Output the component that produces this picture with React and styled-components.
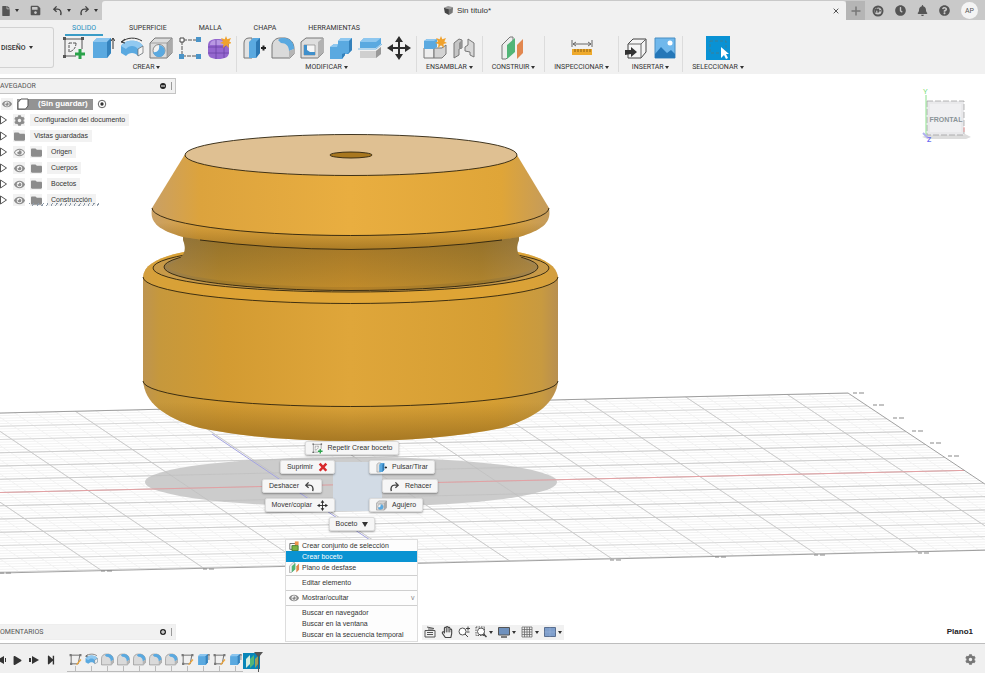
import React from 'react';
import styled, { createGlobalStyle } from 'styled-components';
import {
    FaFile, FaSave, FaClock, FaBell, FaQuestionCircle, FaCog, FaEye, FaRegEye, FaFolder,
    FaPlay, FaStepForward, FaRegHandPaper, FaPuzzlePiece
} from 'react-icons/fa';

const GlobalStyle = createGlobalStyle`
  * { box-sizing: border-box; }
  body { margin: 0; background: #fff; color: #333; font: 7px/10px "Liberation Sans", Arial, sans-serif; }
  button { border: 0; padding: 0; margin: 0; background: none; color: inherit; font: inherit; }
  ul { list-style: none; margin: 0; padding: 0; }
  svg { display: block; flex: none; }
`;

const Screen = styled.div`
  display: flex;
  flex-direction: column;
  min-height: 100vh;
  overflow: hidden;
`;

/* title bar */
const TitleBar = styled.header`
  display: flex;
  height: 20px;
  padding-top: 1px;
  background: #c9c9c9;
  color: #555;
`;

const QuickTools = styled.div`
  display: flex;
  align-items: center;
  width: 102px;
  padding-left: 1px;
`;

const QuickButton = styled.button`
  display: flex;
  align-items: center;
  gap: 4px;
  margin-right: ${p => p.$space || 0}px;
`;

const Caret = styled.span`
  display: inline-block;
  border: solid transparent;
  border-width: ${p => (p.$large ? '5px 3px 0' : '3px 2px 0')};
  border-top-color: #333;
  vertical-align: middle;
`;

const DocumentTab = styled.div`
  display: flex;
  flex: 1;
  align-items: center;
  background: #f1f1f1;
  border-radius: 3px 3px 0 0;
`;

const DocumentTitle = styled.div`
  display: flex;
  flex: 1;
  align-items: center;
  justify-content: center;
  gap: 3px;
  padding-left: 6px;
  color: #333;
  font-size: 8px;
`;

const CloseButton = styled.button`
  display: grid;
  place-items: center;
  width: 20px;
  height: 18px;
`;

const AddTab = styled.button`
  display: grid;
  place-items: center;
  width: 19px;
  background: #b5b5b5;
`;

const Account = styled.div`
  display: flex;
  align-items: center;
  gap: 11px;
  padding: 0 7px;
`;

const Avatar = styled.button`
  width: 17px;
  height: 17px;
  border-radius: 50%;
  background: #f4f4f4;
  font-family: Roboto, sans-serif;
`;

/* ribbon */
const Ribbon = styled.div`
  display: flex;
  height: 54px;
  background: #f1f1f1;
  font-family: Roboto, sans-serif;
`;

const Workspace = styled.button`
  width: 54px;
  height: 41px;
  margin-top: 7px;
  border: 1px solid #d2d2d2;
  border-left: 0;
  border-radius: 0 3px 3px 0;
  font-weight: 500;
  text-align: left;
  padding-left: 1px;
  white-space: nowrap;
`;

const RibbonBody = styled.div`
  flex: 1;
`;

const TabRow = styled.nav`
  display: flex;
  gap: 20px;
  height: 16px;
  padding-left: 11px;
`;

const Tab = styled.button`
  padding: 1px ${p => (p.$active ? 7 : 6)}px 0;
  height: 16px;
  color: ${p => (p.$active ? '#1f8fc0' : '#333')};
  border-bottom: 2px solid ${p => (p.$active ? '#3a9cc6' : 'transparent')};
`;

const Groups = styled.div`
  display: flex;
  padding-left: 3px;
`;

const Group = styled.section`
  display: flex;
  flex-direction: column;
  align-items: center;
  height: 36px;
  border-right: 1px solid ${p => (p.$last ? 'transparent' : '#dcdcdc')};
`;

const GroupTools = styled.div`
  display: flex;
  gap: 5px;
  padding: 0 5px;
`;

const GroupLabel = styled.button`
  height: 12px;
  padding: 2px 9px 0;
  white-space: nowrap;
`;

/* viewport */
const Viewport = styled.main`
  position: relative;
  display: flex;
  flex: 1;
  flex-direction: column;
  justify-content: space-between;
  min-height: 568px;
  padding: 4px 0 3px;
`;

const Scene = styled.svg`
  position: absolute;
  inset: 0;
  width: 100%;
  height: 100%;
`;

const ViewportRow = styled.div`
  position: relative;
  display: flex;
  justify-content: space-between;
`;

const BottomRow = styled.div`
  position: relative;
  display: grid;
  grid-template-columns: 1fr auto 1fr;
  align-items: center;
`;

const PanelHeader = styled.div`
  display: flex;
  align-items: center;
  width: 176px;
  height: 16px;
  padding-right: 2px;
  gap: 5px;
  background: #f1f1f1;
  border: 1px solid ${p => (p.$outlined ? '#c4c4c4' : '#eee')};
  border-left: 0;
  color: #555;
  font-family: Roboto, sans-serif;
`;

const PanelTitle = styled.span`
  flex: 1;
`;

const PanelToggle = styled.button`
  display: grid;
  place-items: center;
  width: 6px;
  height: 6px;
  border-radius: 50%;
  background: #222;
`;

const Grip = styled.span`
  width: 2px;
  height: 8px;
  border-left: 1px solid #999;
`;

const Tree = styled.ul`
  padding-top: 2px;
`;

const TreeRow = styled.li`
  position: relative;
  display: flex;
  align-items: center;
  gap: 5px;
  height: 16px;
  color: #333;
`;

const Expander = styled.button`
  width: 8px;
  height: 12px;
`;

const TreeIcon = styled.span`
  display: grid;
  place-items: center;
  width: 12px;
  height: 12px;
  background: #f2f2f2;
  color: #8c8c8c;
`;

const TreeLabel = styled.span`
  padding: 1px 4px;
  background: #f2f2f2;
`;

const RootLabel = styled.span`
  display: flex;
  align-items: center;
  gap: 9px;
  height: 11px;
  padding-right: 5px;
  background: #939393;
  color: #fff;
  font-size: 8px;
  font-weight: bold;
`;

const RootRow = styled(TreeRow)`
  width: 108px;
  padding-left: 1px;
  gap: 4px;
`;

const Hatch = styled.span`
  position: absolute;
  left: 29px;
  bottom: 2px;
  width: 70px;
  height: 3px;
  background: repeating-linear-gradient(120deg, #8d9aa8 0 1px, transparent 1px 4px);
`;

const CubeView = styled.svg`
  margin: 7px 14px 0 0;
`;

/* marking menu */
const MarkingMenu = styled.div`
  position: absolute;
  left: 263px;
  top: 367px;
  display: flex;
  flex-direction: column;
  align-items: center;
  gap: 5px;
  width: 178px;
`;

const MarkingRows = styled.div`
  position: relative;
  display: flex;
  justify-content: space-between;
  width: 178px;
`;

const MarkingPad = styled.div`
  position: absolute;
  left: 70px;
  top: 2px;
  width: 49px;
  height: 49px;
  background: #d2dbe5;
`;

const MarkingColumn = styled.div`
  position: relative;
  display: flex;
  flex-direction: column;
  width: 72px;
  align-items: ${p => (p.$side === 'left' ? 'flex-end' : 'flex-start')};
  gap: 5px;
`;

const Pill = styled.button`
  display: flex;
  align-items: center;
  justify-content: center;
  gap: 5px;
  height: 14px;
  padding: 0 6px;
  margin: 0 ${p => (p.$inset ? 13 : 0)}px;
  background: #f6f6f6;
  border: 1px solid #dcdcdc;
  border-radius: 2px;
  box-shadow: 0 1px 2px rgba(0, 0, 0, 0.35);
  white-space: nowrap;
`;

const ContextMenu = styled.ul`
  position: absolute;
  left: 285px;
  top: 465px;
  width: 133px;
  padding-bottom: 1px;
  background: #fdfdfd;
  border: 1px solid #ddd;
`;

const MenuItem = styled.li`
  display: grid;
  grid-template-columns: 16px 1fr 6px;
  align-items: center;
  height: 11px;
  background: ${p => (p.$active ? '#0a93d2' : 'transparent')};
  color: ${p => (p.$active ? '#fff' : '#333')};
  white-space: nowrap;
`;

const MenuButton = styled.button`
  height: 11px;
  text-align: left;
`;

const MenuIcon = styled.span`
  display: grid;
  place-items: center;
`;

const MoreMark = styled.span`
  color: #888;
`;

const Separator = styled.li`
  height: 1px;
  margin: 2px 0 1px;
  background: #cfcfcf;
`;

const NavBar = styled.div`
  display: flex;
  align-items: center;
  gap: 5px;
  height: 15px;
  padding: 0 2px;
  background: #f1f1f1;
  color: #444;
`;

const NavButton = styled.button`
  display: flex;
  align-items: center;
  gap: 2px;
`;

const Status = styled.strong`
  justify-self: end;
  padding-right: 12px;
  font-size: 8px;
  color: #222;
`;

/* timeline */
const Timeline = styled.footer`
  display: flex;
  align-items: flex-start;
  justify-content: space-between;
  height: 30px;
  padding: 8px 9px 0 0;
  background: #f0f0f0;
  border-top: 1px solid #bdbdbd;
  color: #333;
`;

const TimelineLeft = styled.div`
  display: flex;
`;

const Playback = styled.div`
  display: flex;
  align-items: center;
  gap: 7px;
  width: 67px;
  height: 16px;
  margin-left: -4px;
`;

const Track = styled.div`
  display: flex;
  margin-left: 4px;
`;

const Step = styled.button`
  display: flex;
  flex-direction: column;
  align-items: center;
  width: 16px;
  height: 20px;
  padding-top: 1px;
  border-bottom: 1px solid #bbb;
`;

const Tick = styled.span`
  width: 1px;
  flex: 1;
  background: #bbb;
`;

const CurrentStep = styled.button`
  display: grid;
  place-items: center;
  width: 20px;
  height: 17px;
`;

const SettingsButton = styled.button`
  padding-top: 2px;
  color: #777;
`;

const Blue = '#5aa9e0';

const drawings = {
    sketch: (
        <>
            <path d="M3 3H20M3 3V20M3 20H14M20 3V13" fill="none" stroke="#555" strokeWidth="1" />
            <path d="M1 1h3v3H1zM19 1h3v3h-3zM1 19h3v3H1z" fill="#555" />
            <path d="M7 16V7M7 7l7 0M14 7c0 5-3 8-7 9" fill="none" stroke="#555" strokeDasharray="3 1" />
            <path d="M18 13v10M13 18h10" stroke="#2aa24a" strokeWidth="3" />
        </>
    ),
    extrude: (
        <>
            <path d="M2 6l4-4h14v15l-4 5H2z" fill={Blue} />
            <path d="M2 6l4-4h14l-4 4z" fill="#8cc6ef" />
            <path d="M16 6l4-4v15l-4 5z" fill="#3583bd" />
            <path d="M22 13V3M20 5l2-3 2 3" fill="none" stroke="#333" />
        </>
    ),
    revolve: (
        <>
            <path d="M1 10c4-7 18-7 22 0v7l-5 3c-3-4-9-4-12 0l-5-3z" fill={Blue} />
            <path d="M1 10c4-7 18-7 22 0l-5 3c-3-4-9-4-12 0z" fill="#91c9f0" />
            <path d="M23 10v7l-5 3v-7z" fill="#f4f4f4" stroke="#666" strokeWidth=".7" />
            <path d="M2 6c5-5 14-5 20-1M5 3L1 6l4 1" fill="none" stroke="#333" />
        </>
    ),
    hole: (
        <>
            <path d="M1 7l5-5h17v15l-5 5H1z" fill="#dcdcdc" stroke="#777" />
            <path d="M18 7l5-5v15l-5 5z" fill="#aaa" />
            <path d="M1 7h17v15M18 7l5-5" fill="none" stroke="#888" strokeWidth=".7" />
            <circle cx="10" cy="14.500" r="6" fill="#f2f2f2" stroke="#888" />
            <path d="M10 9a6 6 0 1 1-6 7c4 1 7-2 6-7z" fill={Blue} />
        </>
    ),
    pattern: (
        <>
            <path d="M5 4h15M4 5v15h15" fill="none" stroke="#555" strokeDasharray="4 1" />
            <path d="M2 2h4v4H2z" fill="#fff" stroke="#444" />
            <path d="M18 1h5v5h-5zM1 18h5v5H1zM18 18h5v5h-5z" fill="#4a94c8" />
        </>
    ),
    form: (
        <>
            <path d="M1 10c0-5 3-7 9-7s12 1 12 7v6c0 5-4 7-11 7S1 21 1 16z" fill="#9567cf" />
            <path d="M3 9c0-4 3-5 7-5s9 1 7 5z" fill="#b898e3" />
            <path d="M1 11h16M9 4v19M17 9v13M1 17h21M17 11l5-3" fill="none" stroke="#6b42a5" strokeWidth=".8" />
            <path d="M19 0l1.300 3.300L24 2l-1.700 3.500L25 7l-3.500 1L22 12l-3-2.700L16 12l.5-4L13 7l3-1.500L14 2l3.700 1.300z" fill="#f0a22e" />
        </>
    ),
    press: (
        <>
            <path d="M2 22V7c0-3 2-5 5-5h3v20z" fill="#e2e2e2" stroke="#777" />
            <path d="M7 6l4-4h7v15l-4 5H7z" fill={Blue} />
            <path d="M14 6l4-4v15l-4 5z" fill="#2d78b3" />
            <path d="M19 12h5M21.500 9.500v5" stroke="#222" strokeWidth="2" />
        </>
    ),
    fillet: (
        <>
            <path d="M1 22V10c0-5 4-8 8-8h5c6 1 9 5 9 11v5l-4 4z" fill="#dadada" stroke="#777" />
            <path d="M10 2h4c6 1 9 5 9 11l-5 2c0-5-3-8-8-8l-3-3z" fill={Blue} />
            <path d="M18 15l5-2v5l-4 4h-1z" fill="#b5b5b5" />
        </>
    ),
    shell: (
        <>
            <path d="M1 6l5-4h17v15l-5 5H1z" fill="#dedede" stroke="#777" />
            <path d="M18 6l5-4v15l-5 5z" fill="#b2b2b2" />
            <path d="M4 9h11v10H4z" fill="#f6f6f6" stroke="#888" strokeWidth=".7" />
            <path d="M4 9h3v5l3 2h5v3H4z" fill="#3f8fcb" />
        </>
    ),
    combine: (
        <>
            <path d="M1 11l4-3h4V5l3-3h11v12l-4 4h-3v1l-3 4H1z" fill={Blue} />
            <path d="M1 11l4-3h4l-1 3zM9 5l3-3h11l-3 3z" fill="#8fc8f0" />
            <path d="M20 5l3-3v12l-4 4h-1l2-2zM13 18l3-1v2l-3 4z" fill="#3481bb" />
        </>
    ),
    split: (
        <>
            <path d="M2 6l4-4h17v6l-5 4H2z" fill={Blue} />
            <path d="M2 6l4-4h17l-5 4z" fill="#8ec7ef" />
            <path d="M0 13h18l6-5" fill="none" stroke="#7bbce9" />
            <path d="M2 15h16l5-4v7l-5 4H2z" fill="#cfcfcf" />
            <path d="M18 15l5-4v7l-5 4z" fill="#999" />
        </>
    ),
    move: (
        <>
            <path d="M12 4v16M4 12h16" stroke="#2d2d2d" strokeWidth="2" />
            <path d="M12 0l4 6H8zM12 24l4-6H8zM0 12l6-4v8zM24 12l-6-4v8z" fill="#2d2d2d" />
        </>
    ),
    component: (
        <>
            <path d="M1 12h10v10H1z" fill="#eee" stroke="#777" />
            <path d="M11 12h8l4-3v9l-4 4h-8z" fill="#d3d3d3" stroke="#777" />
            <path d="M1 5l3-2h10v8l-3 2H1z" fill={Blue} />
            <path d="M1 5l3-2h10l-3 2z" fill="#8ec7ef" />
            <path d="M18 0l1.300 3.300L23 2l-1.700 3.500L24 7l-3.500 1L21 12l-3-2.700L15 12l.5-4L12 7l3-1.500L13 2l3.700 1.300z" fill="#f0a22e" />
        </>
    ),
    joint: (
        <>
            <path d="M2 7l5-4 3 1v8l-3 1v6l-5 3z" fill="#c5c5c5" stroke="#777" />
            <path d="M13 11l3-2V3l6 4v14l-4-2v-3l-5-1z" fill="#d8d8d8" stroke="#777" />
            <path d="M10 4l-3 3v6l3-1z" fill="#929292" />
        </>
    ),
    plane: (
        <>
            <path d="M1 9l8-8h3v15l-7 7H1z" fill="#eee" stroke="#777" />
            <path d="M6 9l8-7v14l-8 7z" fill="#52b577" />
            <path d="M16 9l6-6v14l-6 6z" fill="#e2874f" />
        </>
    ),
    measure: (
        <>
            <path d="M2 4v7M22 4v7M3 8h18M6 6L3 8l3 2M18 6l3 2-3 2" fill="none" stroke="#666" />
            <path d="M2 13h20v6H2z" fill="#efaa2c" />
            <path d="M5 13v3M8 13v3M11 13v3M14 13v3M17 13v3M20 13v3" stroke="#8d6013" />
        </>
    ),
    insert: (
        <>
            <path d="M4 22V8l5-5h13v13l-5 6z" fill="#f4f4f4" stroke="#444" />
            <path d="M4 8h13v14M17 8l5-5" fill="none" stroke="#666" />
            <path d="M1 19v-5h6v-3l6 5-6 5v-3z" fill="#333" />
        </>
    ),
    image: (
        <>
            <path d="M2 2h20v20H2z" fill="#70b8ec" stroke="#488ec2" />
            <circle cx="17" cy="7" r="2.500" fill="#fff" />
            <path d="M2 18l6-7 6 6 4-3 4 4v4H2z" fill="#2477b8" />
        </>
    ),
    select: (
        <>
            <path d="M0 0h24v24H0z" fill="#0992d4" />
            <path d="M4 5h16v12H4z" fill="none" stroke="#3f7f94" strokeDasharray="3 2" />
            <path d="M15 11v11l3-3 2 4 2-1-2-4h3z" fill="#fff" />
        </>
    ),
    step: (
        <>
            <path d="M4 4h16L17 20H4z" fill="none" stroke="#555" strokeWidth="1.500" />
            <path d="M1 2h4v4H1zM19 2h4v4h-4zM2 18h4v4H2z" fill="#777" />
            <path d="M13 21l8-10 2 2-8 9z" fill="#eda53a" />
        </>
    ),
    set: (
        <>
            <path d="M2 6h14v14H2z" fill="none" stroke="#555" strokeWidth="2" />
            <path d="M7 11h15v12H7z" fill="#7cb342" stroke="#35702a" strokeWidth="2" />
            <path d="M14 1h9v9h-9z" fill="#ed934b" />
        </>
    ),
    undo: <path d="M10 3L4 9l6 6M4 9h8c6 0 9 5 7 13" fill="none" stroke="#444" strokeWidth="3" />,
    redo: <path d="M14 3l6 6-6 6M20 9h-8c-6 0-9 5-7 13" fill="none" stroke="#444" strokeWidth="3" />,
    remove: <path d="M4 4l16 17M20 4L4 21" stroke="#d8292c" strokeWidth="6" />,
    document: (
        <>
            <path d="M2 6l9-4 11 3-9 4z" fill="#999" />
            <path d="M2 6l11 3v13L4 17z" fill="#444" />
            <path d="M22 5l-9 4v13l8-5z" fill="#777" />
        </>
    ),
    body: (
        <path d="M2 22V9l6-7h14v14l-5 6z" fill="#fff" stroke="#555" strokeWidth="2" />
    ),
    target: (
        <>
            <circle cx="12" cy="12" r="9" fill="#fff" stroke="#444" strokeWidth="2" />
            <circle cx="12" cy="12" r="4" fill="#333" />
        </>
    ),
    arrow: <path d="M1 4l12 8-12 8z" fill="#fff" stroke="#555" strokeWidth="2" />,
    plus: <path d="M12 3v18M3 12h18" stroke="#777" strokeWidth="3" />,
    close: <path d="M5 5l14 14M19 5L5 19" stroke="#555" strokeWidth="3" />,
    orbit: (
        <>
            <path d="M2 9h20v13H2zM6 2l14 3M8 6h11" fill="none" stroke="#555" strokeWidth="2" />
            <path d="M6 13h12M6 17h12" stroke="#555" strokeWidth="2" />
        </>
    ),
    zoom: (
        <>
            <circle cx="9" cy="11" r="7" fill="#fff" stroke="#555" strokeWidth="2" />
            <path d="M14 16l6 6M20 1v8M16 5h8M17 12h6" stroke="#444" strokeWidth="2" />
        </>
    ),
    zoomWindow: (
        <>
            <path d="M2 2h17v17H2z" fill="none" stroke="#555" strokeWidth="2" strokeDasharray="3 2" />
            <circle cx="12" cy="11" r="7" fill="#fff" stroke="#555" strokeWidth="2" />
            <path d="M17 16l6 6" stroke="#444" strokeWidth="3" />
        </>
    ),
    display: (
        <>
            <path d="M1 3h22v15H1z" fill="#6f91bd" stroke="#555" strokeWidth="2" />
            <path d="M6 22h12" stroke="#555" strokeWidth="3" />
        </>
    ),
    grid: <path d="M2 2h20v20H2zM7 2v20M12 2v20M17 2v20M2 7h20M2 12h20M2 17h20" fill="#eee" stroke="#666" strokeWidth="1.500" />,
    viewports: (
        <>
            <path d="M1 3h22v18H1z" fill="#7f9fcc" stroke="#5a6f90" strokeWidth="2" />
            <path d="M12 3v18M1 12h22" stroke="#9db5d8" strokeWidth="1" />
        </>
    )
};

const Icon = ({ name, size = 24 }) => (
    <svg width={size} height={size} viewBox="0 0 24 24" aria-hidden="true">{drawings[name]}</svg>
);

const tabs = ['SOLIDO', 'SUPERFICIE', 'MALLA', 'CHAPA', 'HERRAMIENTAS'];

const groups = [
    { label: 'CREAR', tools: ['sketch', 'extrude', 'revolve', 'hole', 'pattern', 'form'] },
    { label: 'MODIFICAR', tools: ['press', 'fillet', 'shell', 'combine', 'split', 'move'] },
    { label: 'ENSAMBLAR', tools: ['component', 'joint'] },
    { label: 'CONSTRUIR', tools: ['plane'] },
    { label: 'INSPECCIONAR', tools: ['measure'] },
    { label: 'INSERTAR', tools: ['insert', 'image'] },
    { label: 'SELECCIONAR', tools: ['select'] }
];

const treeRows = [
    { label: 'Configuración del documento', icons: [FaCog] },
    { label: 'Vistas guardadas', icons: [FaFolder] },
    { label: 'Origen', icons: [FaRegEye, FaFolder] },
    { label: 'Cuerpos', icons: [FaEye, FaFolder] },
    { label: 'Bocetos', icons: [FaEye, FaFolder] },
    { label: 'Construcción', icons: [FaEye, FaFolder], hatched: true }
];

const steps = ['step', 'revolve', 'fillet', 'fillet', 'fillet', 'fillet', 'fillet', 'step', 'extrude', 'step', 'extrude'];

const Header = () => (
    <TitleBar>
        <QuickTools>
            <QuickButton $space={11} aria-label="Archivo"><FaFile size={10} /><Caret /></QuickButton>
            <QuickButton $space={11} aria-label="Guardar"><FaSave size={11} /></QuickButton>
            <QuickButton $space={8} aria-label="Deshacer"><Icon name="undo" size={11} /><Caret /></QuickButton>
            <QuickButton aria-label="Rehacer"><Icon name="redo" size={11} /><Caret /></QuickButton>
        </QuickTools>
        <DocumentTab>
            <DocumentTitle><Icon name="document" size={11} />Sin título*</DocumentTitle>
            <CloseButton aria-label="Cerrar"><Icon name="close" size={8} /></CloseButton>
        </DocumentTab>
        <AddTab aria-label="Nueva pestaña"><Icon name="plus" size={12} /></AddTab>
        <Account>
            <button aria-label="Extensiones">
                <svg width="12" height="12" viewBox="0 0 24 24">
                    <circle cx="12" cy="12" r="9" fill="none" stroke="#555" strokeWidth="4" />
                    <FaPuzzlePiece x="5" y="3" size={13} />
                </svg>
            </button>
            <button aria-label="Trabajos"><FaClock size={11} /></button>
            <button aria-label="Avisos"><FaBell size={11} /></button>
            <button aria-label="Ayuda"><FaQuestionCircle size={11} /></button>
            <Avatar>AP</Avatar>
        </Account>
    </TitleBar>
);

const Toolbar = () => (
    <Ribbon>
        <Workspace>DISEÑO&nbsp; <Caret /></Workspace>
        <RibbonBody>
            <TabRow>
                {tabs.map((tab, i) => <Tab key={tab} $active={i === 0}>{tab}</Tab>)}
            </TabRow>
            <Groups>
                {groups.map((group, i) => (
                    <Group key={group.label} $last={i === groups.length - 1}>
                        <GroupTools>
                            {group.tools.map(tool => (
                                <button key={tool} aria-label={tool}><Icon name={tool} /></button>
                            ))}
                        </GroupTools>
                        <GroupLabel>{group.label} <Caret /></GroupLabel>
                    </Group>
                ))}
            </Groups>
        </RibbonBody>
    </Ribbon>
);

/* ground grid: depth lines run from the back edge to the front one, cross lines from left to right */
const depthLine = k => ({ x1: 75 + 101.7 * k, y1: 411 - 2.4 * k, x2: 306 + 102 * k, y2: 566 - 2.4 * k });
const crossLine = k => ({ x1: 0, y1: 413 + 13.25 * k, x2: 848 + 19.4 * k, y2: 393 + 12.9 * k });
const range = (from, to) => Array.from({ length: to - from + 1 }, (_, i) => from + i);

const edgeMarks = [
    [853, 393], [873, 405], [893, 418], [912, 431], [930, 443], [948, 456],
    [0, 573], [101, 571], [203, 569], [306, 566], [610, 560], [715, 557], [814, 555], [918, 553]
];

const Ground = () => (
    <>
        <clipPath id="ground"><path d="M-20 413.500L848 393L1081 548L-20 573z" /></clipPath>
        <g clipPath="url(#ground)" strokeWidth="1">
            <g stroke="#f2f2f2">
                {range(-20, 50).map(k => <line key={k} {...depthLine(k / 5)} />)}
                {range(0, 60).map(k => <line key={k} {...crossLine(k / 5)} />)}
            </g>
            <g stroke="#d8d8d8">
                {range(-4, 9).map(k => <line key={k} {...depthLine(k)} />)}
                {range(0, 12).map(k => <line key={k} {...crossLine(k)} />)}
            </g>
        </g>
        <ellipse cx="351" cy="482" rx="206" ry="25" fill="#c9c9c9" fillOpacity=".95" />
        <g clipPath="url(#ground)" stroke="#b4b4b4" strokeOpacity=".3">
            {range(-2, 9).map(k => <line key={k} {...depthLine(k)} />)}
            {range(3, 9).map(k => <line key={k} {...crossLine(k)} />)}
        </g>
        <line {...crossLine(6)} stroke="#e3a0a3" />
        <path d="M212 434L370 540" stroke="#a3a3e0" />
        <path d="M0 413L848 393L1081 548M0 573L1081 548" fill="none" stroke="#8a8a8a" strokeWidth=".8" />
        {edgeMarks.map(([x, y]) => (
            <path key={x} d={`M${x} ${y}h4m2 0h5`} stroke="#888" strokeWidth="1.200" />
        ))}
    </>
);

const Part = () => (
    <>
        <defs>
            <linearGradient id="side">
                <stop offset="0" stopColor="#bd9450" />
                <stop offset=".04" stopColor="#c6983c" />
                <stop offset=".2" stopColor="#d39b32" />
                <stop offset=".5" stopColor="#dfa63a" />
                <stop offset=".85" stopColor="#d59e33" />
                <stop offset=".96" stopColor="#c89a40" />
                <stop offset="1" stopColor="#b88f50" />
            </linearGradient>
            <linearGradient id="cone">
                <stop offset="0" stopColor="#c9a065" />
                <stop offset=".12" stopColor="#dca33d" />
                <stop offset=".5" stopColor="#e9ae40" />
                <stop offset=".88" stopColor="#dfa538" />
                <stop offset="1" stopColor="#c49b5c" />
            </linearGradient>
            <linearGradient id="neck">
                <stop offset="0" stopColor="#9b8050" />
                <stop offset=".15" stopColor="#a17b2c" />
                <stop offset=".5" stopColor="#b48128" />
                <stop offset=".85" stopColor="#9f792c" />
                <stop offset="1" stopColor="#a28552" />
            </linearGradient>
            <linearGradient id="shade" x1="0" y1="0" x2="0" y2="1">
                <stop offset=".35" stopColor="#8a6118" stopOpacity="0" />
                <stop offset="1" stopColor="#8a6118" stopOpacity=".65" />
            </linearGradient>
            <linearGradient id="neckShade" x1="0" y1="0" x2="0" y2="1">
                <stop offset="0" stopColor="#6d5524" stopOpacity=".3" />
                <stop offset="1" stopColor="#d59c30" stopOpacity=".35" />
            </linearGradient>
        </defs>
        <path d="M143 381C145 402 162 417 200 428Q265 441 351 441Q437 441 502 428C538 417 556 402 558 381z" fill="url(#side)" />
        <path d="M143 381A207.500 25.500 0 0 0 558 381C556 402 538 417 502 428Q437 441 351 441Q265 441 200 428C162 417 145 402 143 381z" fill="url(#shade)" />
        <path d="M143 277C144 264 160 256 190 251H512C541 256 556 264 558 277V381A207.500 25.500 0 0 1 143 381z" fill="url(#side)" />
        <path d="M143 277C144 264 160 256 190 251H512C541 256 556 264 558 277A207.500 26.500 0 0 1 143 277z" fill="#e3a636" fillOpacity=".6" />
        <ellipse cx="351" cy="268" rx="198" ry="24" fill="#c89a48" stroke="#2d220d" strokeWidth=".9" />
        <ellipse cx="351" cy="267" rx="187" ry="23.500" fill="url(#neck)" stroke="#2d220d" strokeWidth=".9" />
        <path d="M183 230V240C188 252 183 260 165 266A187 23.500 0 0 0 537 266C519 260 514 252 519 240V230z" fill="url(#neck)" />
        <path d="M183 230V240C188 252 183 260 165 266A187 23.500 0 0 0 537 266C519 260 514 252 519 240V230z" fill="url(#neckShade)" />
        <path d="M184.500 155L152 208C150 220 154 229 183 237Q260 249 351 249.500Q442 249 519 237C547 229 551 220 549 208L517 155z" fill="url(#cone)" />
        <path d="M152 208C150 220 154 229 183 237Q260 249 351 249.500Q442 249 519 237C547 229 551 220 549 208A198.500 27 0 0 1 152 208z" fill="url(#shade)" />
        <g fill="none" stroke="#2d220d" strokeWidth=".9">
            <path d="M152 208A198.500 27.500 0 0 0 549 208" />
            <path d="M200 240Q270 249 351 249.500Q430 249 502 240" />
            <path d="M143 277A207.500 26.500 0 0 0 558 277" />
            <path d="M143 381A207.500 25.500 0 0 0 558 381" />
        </g>
        <ellipse cx="351" cy="155" rx="166" ry="20.500" fill="#dfc092" stroke="#2d220d" strokeWidth=".9" />
        <ellipse cx="351" cy="155" rx="21" ry="3" fill="#a8771f" stroke="#2d220d" strokeWidth=".9" />
    </>
);

const Navigator = () => (
    <div>
        <PanelHeader $outlined>
            <PanelTitle>AVEGADOR</PanelTitle>
            <PanelToggle aria-label="Contraer">
                <svg width="4" height="4"><path d="M0 2h4" stroke="#fff" /></svg>
            </PanelToggle>
            <Grip />
        </PanelHeader>
        <Tree>
            <RootRow>
                <TreeIcon><FaEye size={10} /></TreeIcon>
                <RootLabel><Icon name="body" size={12} />(Sin guardar)</RootLabel>
                <Icon name="target" size={10} />
            </RootRow>
            {treeRows.map(row => (
                <TreeRow key={row.label}>
                    <Expander aria-label="Expandir"><Icon name="arrow" size={12} /></Expander>
                    {row.icons.map((Glyph, i) => <TreeIcon key={i}><Glyph size={11} /></TreeIcon>)}
                    <TreeLabel>{row.label}</TreeLabel>
                    {row.hatched && <Hatch />}
                </TreeRow>
            ))}
        </Tree>
    </div>
);

const ViewCube = () => (
    <CubeView width="50" height="64" viewBox="920 85 50 64">
        <path d="M921 137l7-3h36l6 3-5 2h-38z" fill="#ddd" />
        <path d="M926 101h37v34h-37z" fill="#e9e9eb" stroke="#999" strokeWidth=".7" strokeDasharray="6 2" />
        <path d="M929 104h31v28h-31z" fill="#f0f0f2" />
        <path d="M925 95v41" stroke="#8ce08c" />
        <path d="M963 127v5" stroke="#efa0a0" />
        <path d="M922 133l5 5" stroke="#b0b0f0" strokeWidth="2" />
        <text x="922" y="94" fontSize="7" fill="#6fdc6f">Y</text>
        <text x="926" y="142" fontSize="7" fontWeight="bold" fill="#6c6cf0">Z</text>
        <text x="945" y="122" fontSize="7" fontWeight="bold" fill="#8b9499" textAnchor="middle">FRONTAL</text>
    </CubeView>
);

const Marking = () => (
    <MarkingMenu>
        <Pill><Icon name="sketch" size={11} />Repetir Crear boceto</Pill>
        <MarkingRows>
            <MarkingPad />
            <MarkingColumn $side="left">
                <Pill>Suprimir<Icon name="remove" size={10} /></Pill>
                <Pill $inset>Deshacer<Icon name="undo" size={11} /></Pill>
                <Pill>Mover/copiar<Icon name="move" size={11} /></Pill>
            </MarkingColumn>
            <MarkingColumn $side="right">
                <Pill><Icon name="press" size={11} />Pulsar/Tirar</Pill>
                <Pill $inset><Icon name="redo" size={11} />Rehacer</Pill>
                <Pill><Icon name="hole" size={11} />Agujero</Pill>
            </MarkingColumn>
        </MarkingRows>
        <Pill>Boceto <Caret $large /></Pill>
    </MarkingMenu>
);

const Item = ({ icon, active, more, children }) => (
    <MenuItem $active={active}>
        <MenuIcon>{icon}</MenuIcon>
        <MenuButton>{children}</MenuButton>
        {more && <MoreMark>v</MoreMark>}
    </MenuItem>
);

const Context = () => (
    <ContextMenu>
        <Item icon={<Icon name="set" size={10} />}>Crear conjunto de selección</Item>
        <Item active>Crear boceto</Item>
        <Item icon={<Icon name="plane" size={11} />}>Plano de desfase</Item>
        <Separator />
        <Item>Editar elemento</Item>
        <Separator />
        <Item icon={<FaEye size={10} color="#888" />} more>Mostrar/ocultar</Item>
        <Separator />
        <Item>Buscar en navegador</Item>
        <Item>Buscar en la ventana</Item>
        <Item>Buscar en la secuencia temporal</Item>
    </ContextMenu>
);

const App = () => (
    <Screen>
        <GlobalStyle />
        <Header />
        <Toolbar />
        <Viewport>
            <Scene viewBox="0 74 985 569" preserveAspectRatio="xMinYMin slice">
                <Ground />
                <Part />
            </Scene>
            <ViewportRow>
                <Navigator />
                <ViewCube />
            </ViewportRow>
            <BottomRow>
                <PanelHeader>
                    <PanelTitle>OMENTARIOS</PanelTitle>
                    <PanelToggle aria-label="Expandir comentarios">
                        <svg width="4" height="4"><path d="M0 2h4M2 0v4" stroke="#fff" /></svg>
                    </PanelToggle>
                    <Grip />
                </PanelHeader>
                <NavBar>
                    <NavButton aria-label="Mirar"><Icon name="orbit" size={12} /></NavButton>
                    <NavButton aria-label="Encuadre"><FaRegHandPaper size={12} /></NavButton>
                    <NavButton aria-label="Zoom"><Icon name="zoom" size={12} /></NavButton>
                    <NavButton aria-label="Ventana de zoom"><Icon name="zoomWindow" size={12} /><Caret /></NavButton>
                    <NavButton aria-label="Visualización"><Icon name="display" size={12} /><Caret /></NavButton>
                    <NavButton aria-label="Rejilla"><Icon name="grid" size={12} /><Caret /></NavButton>
                    <NavButton aria-label="Ventanas gráficas"><Icon name="viewports" size={12} /><Caret /></NavButton>
                </NavBar>
                <Status>Plano1</Status>
            </BottomRow>
            <Marking />
            <Context />
        </Viewport>
        <Timeline>
            <TimelineLeft>
                <Playback>
                    <button aria-label="Atrás">
                        <svg width="10" height="10" viewBox="0 0 10 10"><path d="M8 1v8L1 5zM9 3h1v4H9z" fill="#333" /></svg>
                    </button>
                    <button aria-label="Reproducir"><FaPlay size={9} /></button>
                    <button aria-label="Adelante">
                        <svg width="10" height="10" viewBox="0 0 10 10"><path d="M3 1v8l7-4zM0 3h2v4H0z" fill="#333" /></svg>
                    </button>
                    <button aria-label="Final"><FaStepForward size={10} /></button>
                </Playback>
                <Track>
                    {steps.map((step, i) => (
                        <Step key={i} aria-label={step}>
                            <Icon name={step} size={13} />
                            <Tick />
                        </Step>
                    ))}
                    <CurrentStep aria-label="Plano de desfase">
                        <svg width="20" height="20" viewBox="0 0 20 20">
                            <path d="M0 1h17v16H0z" fill="#0786b8" />
                            <path d="M3 7l4-4v9l-4 4z" fill="#d5eee0" />
                            <path d="M7 7l4-4v9l-4 4z" fill="#52b577" />
                            <path d="M12 7l3-3v8l-3 4z" fill="#9ba05a" />
                            <path d="M11 0h9l-4 5v15h-1V5z" fill="#555" />
                        </svg>
                    </CurrentStep>
                </Track>
            </TimelineLeft>
            <SettingsButton aria-label="Preferencias"><FaCog size={11} /></SettingsButton>
        </Timeline>
    </Screen>
);

export default App;
